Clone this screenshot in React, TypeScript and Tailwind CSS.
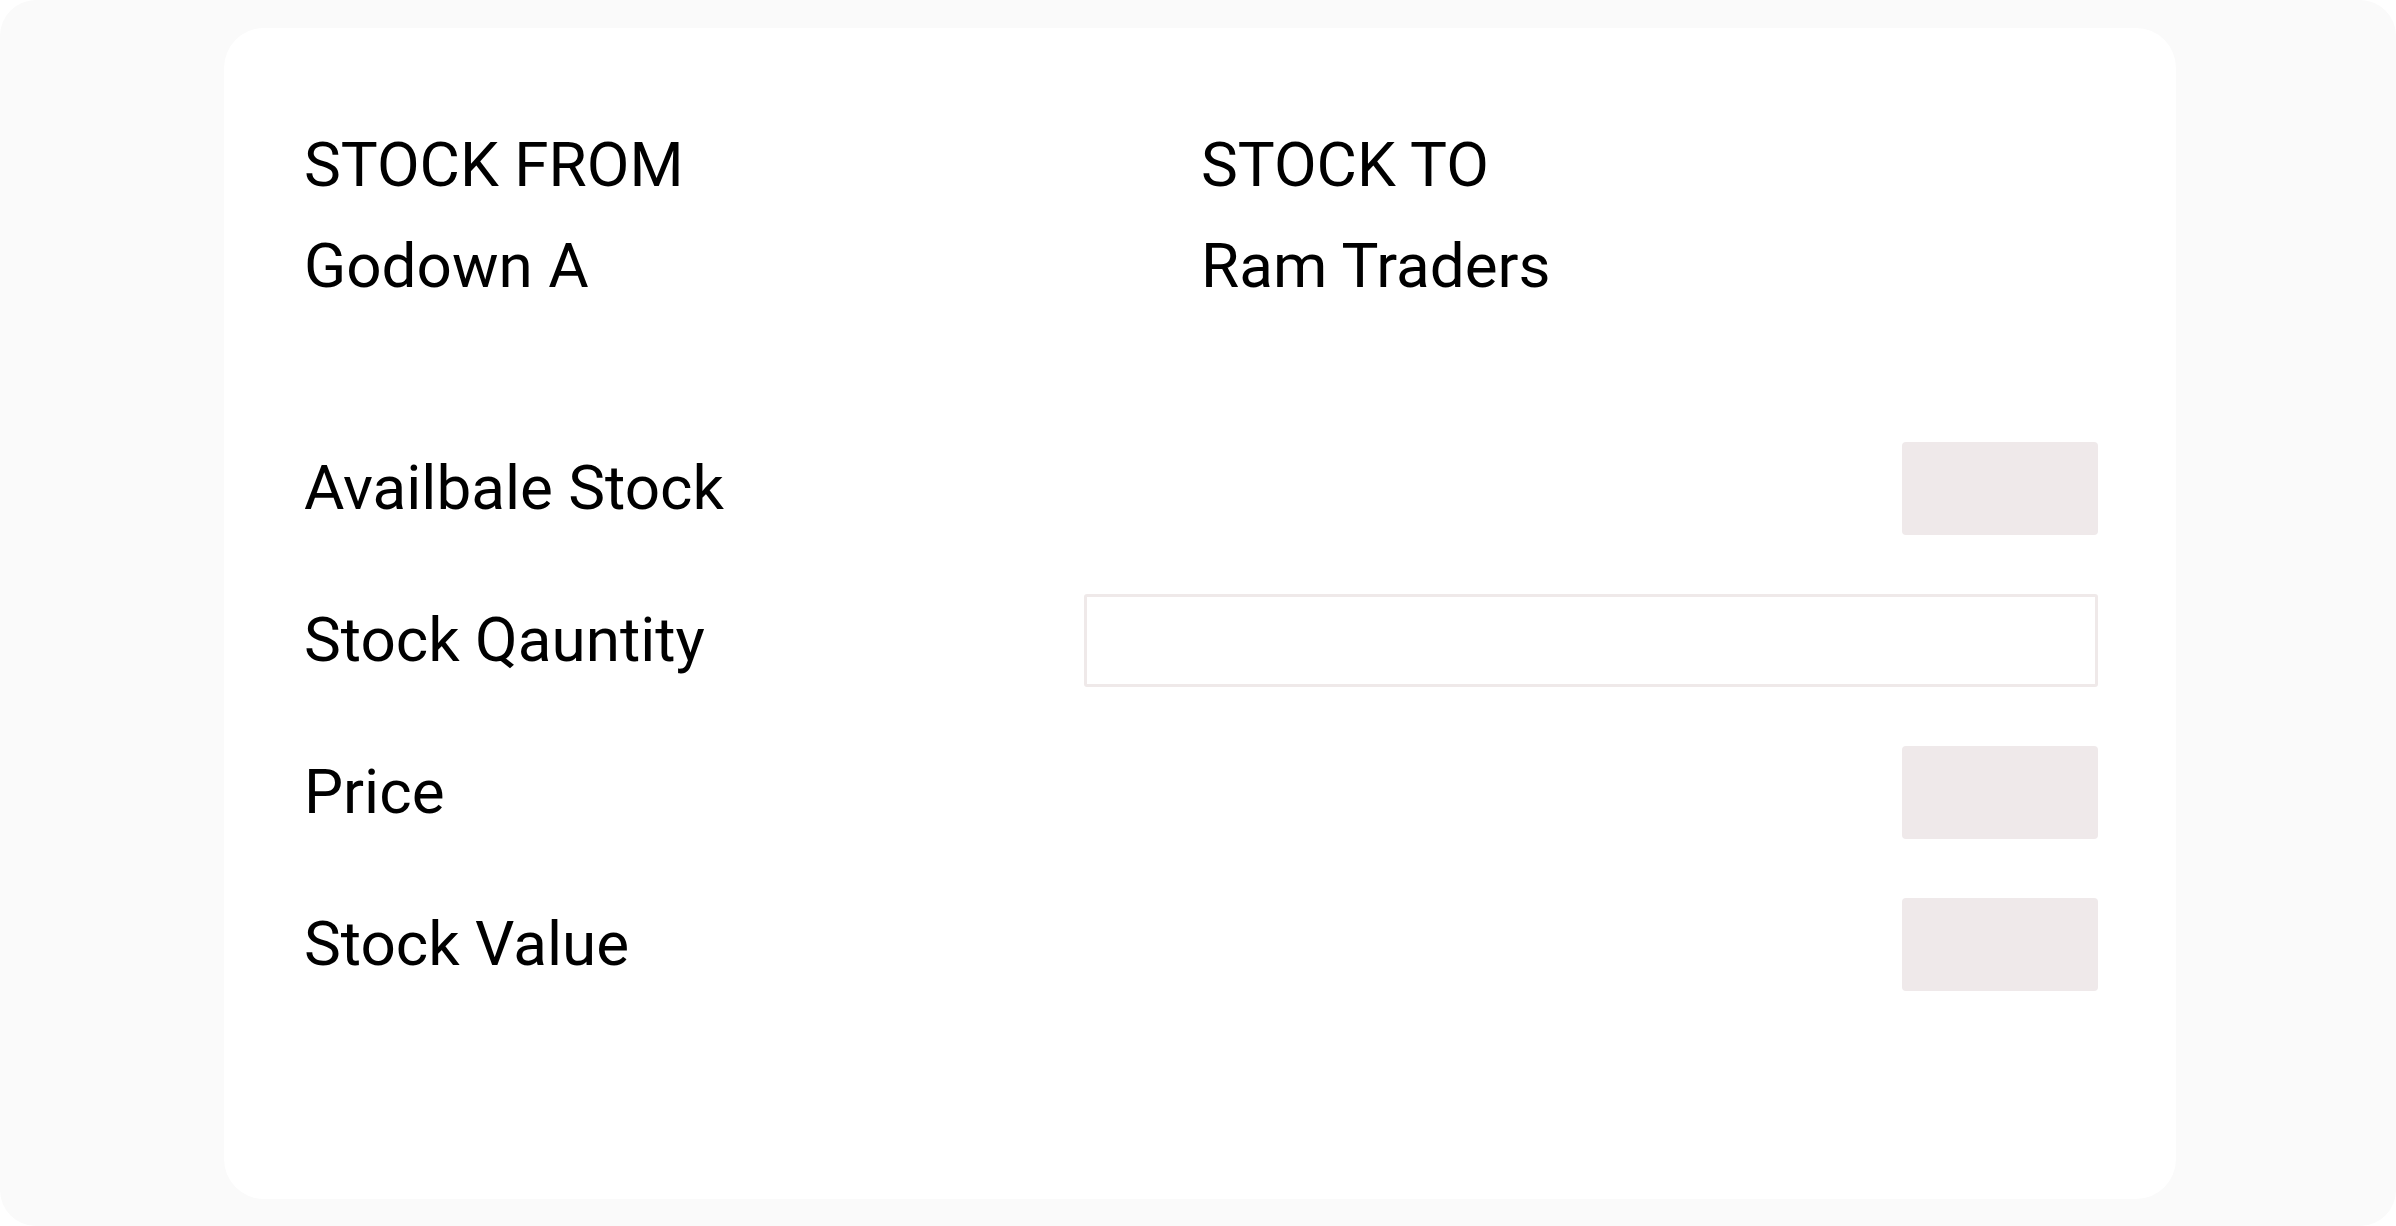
export default function App() {
  const font = { fontFamily: "Roboto, 'Noto Sans', sans-serif" };
  const rows = [
    { label: "Availbale Stock", kind: "box" },
    { label: "Stock Qauntity", kind: "input" },
    { label: "Price", kind: "box" },
    { label: "Stock Value", kind: "box" },
  ];
  return (
    <div className="w-[2396px] h-[1226px] bg-white">
      <div
        className="w-full h-full rounded-[36px] bg-[#fafafa] pt-[28px] pl-[224px]"
        style={font}
      >
        <div className="w-[1952px] h-[1171px] rounded-[40px] bg-white pt-[101px] pl-[80px] pr-[78px] text-black">
          <div className="grid grid-cols-2">
            <div className="flex flex-col gap-[29px]">
              <div className="text-[62px] leading-[72px]">STOCK FROM</div>
              <div className="text-[62px] leading-[72px]">Godown A</div>
            </div>
            <div className="flex flex-col gap-[29px]">
              <div className="text-[62px] leading-[72px]">STOCK TO</div>
              <div className="text-[62px] leading-[72px]">Ram Traders</div>
            </div>
          </div>
          <div className="mt-[140px] flex flex-col gap-[59px]">
            {rows.map((r) => (
              <div key={r.label} className="flex items-center justify-between h-[93px]">
                <div className="text-[62px] leading-[72px] pb-[2px]">{r.label}</div>
                {r.kind === "box" ? (
                  <div className="w-[196px] h-[93px] rounded-[4px] bg-[#efe9ea]" />
                ) : (
                  <input
                    type="text"
                    className="w-[1014px] h-[93px] rounded-[3px] border-[3px] border-[#efe9e9] bg-white outline-none"
                  />
                )}
              </div>
            ))}
          </div>
        </div>
      </div>
    </div>
  );
}
